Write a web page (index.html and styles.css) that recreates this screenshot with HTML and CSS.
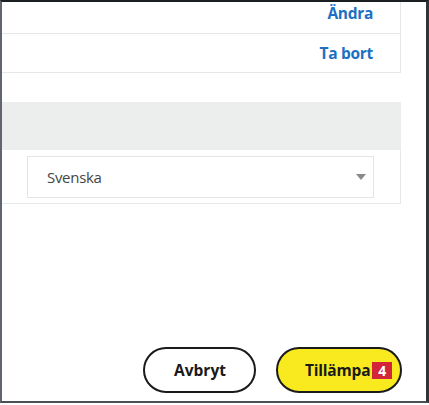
FILE: index.html
```html
<!DOCTYPE html>
<html lang="sv">
<head>
<meta charset="utf-8">
<link rel="stylesheet" href="styles.css">
</head>
<body>
<div class="frame">
  <div class="content">
    <div class="card">
      <div class="row row-first"><a class="link">Ändra</a></div>
      <div class="row"><a class="link">Ta bort</a></div>
    </div>
    <div class="lang-head"></div>
    <div class="lang-body">
      <div class="select">
        <span class="select-text">Svenska</span>
        <span class="caret"></span>
      </div>
    </div>
    <div class="spacer"></div>
    <div class="actions">
      <button class="btn btn-cancel">Avbryt</button>
      <button class="btn btn-apply">Tillämpa<span class="badge">4</span></button>
    </div>
  </div>
</div>
</body>
</html>
```

FILE: styles.css
```css
html, body {
  margin: 0;
  padding: 0;
  background: #ffffff;
}

.frame {
  box-sizing: border-box;
  width: 429px;
  height: 403px;
  border-top: 2px solid #1c1f22;
  border-left: 2px solid #60666c;
  border-right: 3px solid #2f3439;
  border-bottom: 2px solid #4a5056;
  padding-right: 25px;
  overflow: hidden;
  display: flex;
  font-family: "Open Sans", "Noto Sans", sans-serif;
}

.content {
  flex: 1;
  display: flex;
  flex-direction: column;
}

.card {
  margin-top: -9px;
  border-right: 1px solid #e6e7e8;
  border-bottom: 1px solid #e6e7e8;
}

.row {
  height: 38px;
  display: flex;
  align-items: center;
  justify-content: flex-end;
  padding-right: 27px;
}

.row-first {
  height: 40px;
  border-bottom: 1px solid #e6e7e8;
}

.link {
  color: #1d6fc2;
  font-weight: 700;
  font-size: 15.5px;
  letter-spacing: -0.3px;
}

.lang-head {
  margin-top: 29px;
  height: 48px;
  background: #eceded;
}

.lang-body {
  padding: 6px 26px 5px 25px;
  border-right: 1px solid #e6e7e8;
  border-bottom: 1px solid #e6e7e8;
}

.select {
  height: 40px;
  border: 1px solid #e4e5e6;
  display: flex;
  align-items: center;
  justify-content: space-between;
  padding: 0 7px 0 19px;
}

.select-text {
  font-size: 15px;
  color: #454545;
  letter-spacing: -0.3px;
}

.caret {
  width: 0;
  height: 0;
  border-left: 5px solid transparent;
  border-right: 5px solid transparent;
  border-top: 6px solid #8a8a8a;
}

.spacer {
  flex: 1;
}

.actions {
  display: flex;
  justify-content: flex-end;
  gap: 20px;
  margin-right: -1px;
  margin-bottom: 8px;
}

.btn {
  box-sizing: border-box;
  height: 46px;
  border: 2.5px solid #1a1a1a;
  border-radius: 23px;
  font-family: "Open Sans", "Noto Sans", sans-serif;
  font-weight: 700;
  font-size: 15.5px;
  color: #1a1a1a;
  display: flex;
  align-items: center;
  justify-content: center;
  padding: 0 0 0 1px;
}

.btn-cancel {
  width: 113px;
  background: #ffffff;
}

.btn-apply {
  width: 126px;
  background: #f8ea1f;
  justify-content: flex-start;
  padding-left: 27px;
  letter-spacing: -0.2px;
}

.badge {
  margin-left: 2px;
  width: 20px;
  height: 17px;
  background: #d2253a;
  color: #ffffff;
  font-size: 14px;
  font-weight: 700;
  letter-spacing: 0;
  display: flex;
  align-items: center;
  justify-content: center;
}
```
